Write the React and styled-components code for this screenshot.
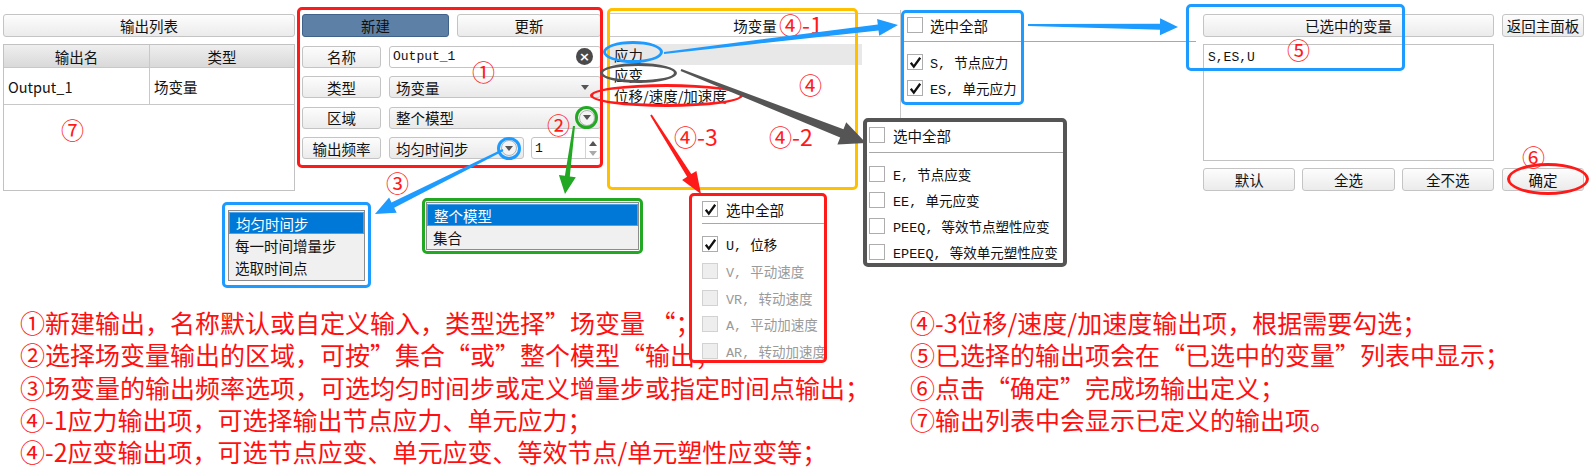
import React from 'react';
import styled, { createGlobalStyle, css } from 'styled-components';

const UI_FONT = `"Noto Sans CJK SC", "Noto Sans", sans-serif`;
const MONO_FONT = `"Liberation Mono", "Noto Sans CJK SC", monospace`;

const RED = '#ff1a1a';
const BLUE = '#1e9bff';
const GREEN = '#22a822';
const GRAY = '#555555';
const YELLOW = '#ffc000';

const GlobalStyle = createGlobalStyle`
  html, body {
    margin: 0;
    padding: 0;
    background: #fff;
  }
  body {
    font-family: ${UI_FONT};
    color: #111;
  }
`;

const Canvas = styled.div`
  position: relative;
  width: 1589px;
  height: 472px;
  overflow: hidden;
  background: #fff;
`;

const TopRow = styled.div`
  display: flex;
  align-items: flex-start;
  height: 200px;
`;

// buttons
const Button = styled.div`
  height: 23px;
  box-sizing: border-box;
  border: 1px solid #c4c4c4;
  border-radius: 3px;
  background: linear-gradient(#fdfdfd, #ebebeb);
  display: flex;
  align-items: center;
  justify-content: center;
  font-size: 14.5px;
  white-space: nowrap;
  ${(p) => p.$primary && css`
    background: #5d80a6;
    border-color: #40618a;
    color: #111;
  `}
  ${(p) => p.$width && css`width: ${p.$width}px;`}
`;

// left: output list
const LeftPanel = styled.div`
  margin: 14px 0 0 3px;
  width: 292px;
  display: flex;
  flex-direction: column;
  gap: 7px;
`;

const Table = styled.div`
  height: 147px;
  box-sizing: border-box;
  border: 1px solid #c2c2c2;
  font-size: 14.5px;
`;

const TableRow = styled.div`
  display: grid;
  grid-template-columns: 145px 1fr;
  height: ${(p) => (p.$head ? 23 : 37)}px;
  box-sizing: border-box;
  border-bottom: 1px solid #c8c8c8;
  ${(p) => p.$head && css`background: linear-gradient(#efefef, #d9d9d9);`}
`;

const Cell = styled.div`
  display: flex;
  align-items: center;
  justify-content: ${(p) => (p.$head ? 'center' : 'flex-start')};
  padding-left: ${(p) => (p.$head ? 0 : 4)}px;
  & + & {
    border-left: 1px solid #c8c8c8;
  }
`;

// middle: form
const FormPanel = styled.div`
  margin: 14px 0 0 7px;
  width: 299px;
  display: grid;
  grid-template-columns: 79px 1fr;
  column-gap: 8px;
  row-gap: 8.5px;
  font-size: 14.5px;
`;

const ButtonBar = styled.div`
  grid-column: 1 / 3;
  display: flex;
  gap: 8px;
  & > :last-child {
    flex: 1;
  }
`;

const Field = styled.div`
  height: 22px;
  box-sizing: border-box;
  border: 1px solid #c4c4c4;
  border-radius: 3px;
  display: flex;
  align-items: center;
  justify-content: space-between;
  padding: 0 ${(p) => p.$padRight ?? 10}px 0 ${(p) => (p.$mono ? 3 : 6)}px;
  background: ${(p) => (p.$white ? '#fff' : 'linear-gradient(#f9f9f9, #e9e9e9)')};
  font-family: ${(p) => (p.$mono ? MONO_FONT : UI_FONT)};
  font-size: ${(p) => (p.$mono ? 13 : 14.5)}px;
  ${(p) => p.$width && css`width: ${p.$width}px; flex: none;`}
`;

const LabelButton = styled(Button)`
  height: 22px;
`;

const FreqRow = styled.div`
  display: flex;
  gap: 7px;
  & > :last-child {
    flex: 1;
  }
`;

const Triangle = styled.span`
  width: 0;
  height: 0;
  border-left: 4.5px solid transparent;
  border-right: 4.5px solid transparent;
  ${(p) => (p.$up
    ? css`border-bottom: 5px solid ${p.$color || '#555'};`
    : css`border-top: 5px solid ${p.$color || '#555'};`)}
`;

const RoundArrow = styled.span`
  width: 16px;
  height: 16px;
  box-sizing: border-box;
  border: 1px solid #b3b3b3;
  border-radius: 50%;
  background: #f4f4f4;
  display: flex;
  align-items: center;
  justify-content: center;
`;

const ClearIcon = styled.span`
  width: 17px;
  height: 17px;
  border-radius: 50%;
  background: #4a4a4a;
  color: #fff;
  font-family: "DejaVu Sans", sans-serif;
  font-size: 13px;
  font-weight: bold;
  line-height: 17px;
  text-align: center;
`;

const SpinArrows = styled.span`
  align-self: stretch;
  width: 14px;
  border-left: 1px solid #d4d4d4;
  display: flex;
  flex-direction: column;
  align-items: center;
  justify-content: center;
  gap: 5px;
`;

// field variable tree
const FieldPanel = styled.div`
  margin: 13px 0 0 9px;
  width: 290px;
  font-size: 14.5px;
`;

const FieldHeader = styled.div`
  height: 24px;
  box-sizing: border-box;
  border-top: 1px solid #c9c9c9;
  border-bottom: 1px solid #c9c9c9;
  display: flex;
  align-items: center;
  justify-content: center;
`;

const FieldList = styled.div`
  padding-top: 7px;
`;

const FieldItem = styled.div`
  height: 20.5px;
  display: flex;
  align-items: center;
  padding-left: 4px;
  width: 248px;
  ${(p) => p.$active && css`background: #e8e8e8;`}
`;

// checklists
const StressList = styled.div`
  margin-top: 10px;
  width: 296px;
  height: 185px;
  box-sizing: border-box;
  border-left: 1px solid #c8c8c8;
  padding: 2px 0 0 6px;
`;

const CheckRow = styled.div`
  height: ${(p) => p.$h || 26}px;
  display: flex;
  align-items: center;
  gap: ${(p) => p.$gap || 7}px;
  white-space: nowrap;
  color: ${(p) => (p.$disabled ? '#9a9a9a' : '#111')};
  font-family: ${(p) => (p.$mono ? MONO_FONT : UI_FONT)};
  font-size: ${(p) => (p.$mono ? 13.5 : 14.5)}px;
`;

const Separator = styled.div`
  height: 1px;
  background: #a8a8a8;
  margin: ${(p) => p.$m || '3px 0 6px'};
`;

const Box = styled.span`
  flex: none;
  width: 16px;
  height: 16px;
  box-sizing: border-box;
  border: 1px solid ${(p) => (p.$disabled ? '#d2d2d2' : '#adadad')};
  background: ${(p) => (p.$disabled ? '#eeeeee' : '#fff')};
  display: flex;
  align-items: center;
  justify-content: center;
`;

const Check = ({ checked, disabled, label, mono, h, gap }) => (
  <CheckRow $mono={mono} $disabled={disabled} $h={h} $gap={gap}>
    <Box $disabled={disabled}>
      {checked && (
        <svg width="13" height="13" viewBox="0 0 13 13">
          <path d="M1.8 6.8 L4.8 10.6 L11.2 1.8" fill="none" stroke="#111" strokeWidth="2.3" />
        </svg>
      )}
    </Box>
    <span>{label}</span>
  </CheckRow>
);

// selected variables
const SelectedPanel = styled.div`
  margin: 14px 0 0 7px;
  width: 381px;
  display: grid;
  grid-template-columns: 291px 82px;
  grid-template-rows: 23px 117px 23px;
  column-gap: 8px;
  row-gap: 7px;
`;

const TextArea = styled.div`
  box-sizing: border-box;
  border: 1px solid #c2c2c2;
  padding: 5px 4px;
  font-family: ${MONO_FONT};
  font-size: 13px;
`;

const ButtonGroup = styled.div`
  display: grid;
  grid-template-columns: repeat(3, 1fr);
  gap: 7px;
`;

// notes
const Notes = styled.div`
  display: flex;
  padding-top: 106px;
  color: #ff1010;
  font-size: 25px;
  line-height: 32.3px;
  white-space: nowrap;
`;

const NoteColumn = styled.div`
  width: ${(p) => p.$width}px;
  padding-left: ${(p) => p.$pad}px;
  box-sizing: border-box;
`;

// overlays
const Frame = styled.div`
  position: absolute;
  left: ${(p) => p.$x}px;
  top: ${(p) => p.$y}px;
  width: ${(p) => p.$w}px;
  height: ${(p) => p.$h}px;
  box-sizing: border-box;
  border: ${(p) => p.$bw || 3}px solid ${(p) => p.$color};
  border-radius: ${(p) => (p.$round ? '50%' : '5px')};
  background: ${(p) => (p.$fill ? '#fff' : 'transparent')};
  overflow: hidden;
  ${(p) => p.$pad && css`padding: ${p.$pad};`}
`;

const ListBox = styled.div`
  box-sizing: border-box;
  height: 100%;
  border: 1px solid #8c8c8c;
  background: #f0f0f0;
  font-size: 14.5px;
  padding-top: 1px;
`;

const ListOption = styled.div`
  height: 22px;
  box-sizing: border-box;
  display: flex;
  align-items: center;
  padding-left: 6px;
  ${(p) => p.$selected && css`
    background: #0078d7;
    color: #fff;
    border: 1px solid #4aa3ea;
  `}
`;

const Annot = styled.div`
  position: absolute;
  left: ${(p) => p.$x}px;
  top: ${(p) => p.$y}px;
  color: #ff1a1a;
  font-size: 23px;
  line-height: 24px;
  white-space: nowrap;
`;

const ArrowLayer = styled.svg`
  position: absolute;
  left: 0;
  top: 0;
  pointer-events: none;
`;

const arrowPoints = ([x1, y1, x2, y2, w0, w1, hl, hw]) => {
  const dx = x2 - x1;
  const dy = y2 - y1;
  const len = Math.hypot(dx, dy);
  const ux = dx / len;
  const uy = dy / len;
  const nx = -uy;
  const ny = ux;
  const bx = x2 - ux * hl;
  const by = y2 - uy * hl;
  const pts = [
    [x1 + (nx * w0) / 2, y1 + (ny * w0) / 2],
    [bx + (nx * w1) / 2, by + (ny * w1) / 2],
    [bx + (nx * hw) / 2, by + (ny * hw) / 2],
    [x2, y2],
    [bx - (nx * hw) / 2, by - (ny * hw) / 2],
    [bx - (nx * w1) / 2, by - (ny * w1) / 2],
    [x1 - (nx * w0) / 2, y1 - (ny * w0) / 2],
  ];
  return pts.map((p) => p.map((v) => v.toFixed(1)).join(',')).join(' ');
};

const arrows = [
  { color: BLUE, geo: [664, 53, 898, 25, 2, 6, 20, 17] },
  { color: BLUE, geo: [1028, 25, 1178, 27, 2, 6, 18, 17] },
  { color: GRAY, geo: [681, 70, 866, 143, 2, 9, 26, 24] },
  { color: RED, geo: [651, 115, 701, 194, 2, 5, 22, 17] },
  { color: GREEN, geo: [574, 126, 565, 194, 2, 5, 18, 17] },
  { color: BLUE, geo: [503, 150, 375, 214, 2, 6, 20, 17] },
];

const rings = [
  { x: 297, y: 7, w: 306, h: 161, color: RED },
  { x: 607, y: 8, w: 251, h: 182, color: YELLOW },
  { x: 901, y: 10, w: 123, h: 95, color: BLUE },
  { x: 1186, y: 4, w: 219, h: 67, color: BLUE },
  { x: 603, y: 41, w: 60, h: 22, color: BLUE, round: true },
  { x: 600, y: 63, w: 77, h: 20, color: GRAY, round: true },
  { x: 590, y: 84, w: 153, h: 23, color: RED, round: true },
  { x: 1507, y: 163, w: 82, h: 32, color: RED, round: true },
  { x: 575, y: 106, w: 23, h: 23, color: GREEN, round: true },
  { x: 497, y: 137, w: 24, h: 23, color: BLUE, round: true },
];

const labels = [
  { x: 472, y: 59, t: '①' },
  { x: 547, y: 112, t: '②' },
  { x: 386, y: 170, t: '③' },
  { x: 779, y: 12, t: '④-1' },
  { x: 799, y: 72, t: '④' },
  { x: 769, y: 124, t: '④-2' },
  { x: 674, y: 124, t: '④-3' },
  { x: 1287, y: 37, t: '⑤' },
  { x: 1522, y: 144, t: '⑥' },
  { x: 61, y: 117, t: '⑦' },
];

const App = () => (
  <Canvas>
    <GlobalStyle />
    <TopRow>
      <LeftPanel>
        <Button>输出列表</Button>
        <Table>
          <TableRow $head>
            <Cell $head>输出名</Cell>
            <Cell $head>类型</Cell>
          </TableRow>
          <TableRow>
            <Cell>Output_1</Cell>
            <Cell>场变量</Cell>
          </TableRow>
        </Table>
      </LeftPanel>

      <FormPanel>
        <ButtonBar>
          <Button $primary $width={147}>新建</Button>
          <Button>更新</Button>
        </ButtonBar>
        <LabelButton>名称</LabelButton>
        <Field $white $mono $padRight={7}>
          <span>Output_1</span>
          <ClearIcon>×</ClearIcon>
        </Field>
        <LabelButton>类型</LabelButton>
        <Field $padRight={11}>
          <span>场变量</span>
          <Triangle />
        </Field>
        <LabelButton>区域</LabelButton>
        <Field $padRight={5}>
          <span>整个模型</span>
          <RoundArrow><Triangle /></RoundArrow>
        </Field>
        <LabelButton>输出频率</LabelButton>
        <FreqRow>
          <Field $width={135} $padRight={6}>
            <span>均匀时间步</span>
            <RoundArrow><Triangle /></RoundArrow>
          </Field>
          <Field $white $mono $padRight={0}>
            <span>1</span>
            <SpinArrows>
              <Triangle $up />
              <Triangle $color="#aaa" />
            </SpinArrows>
          </Field>
        </FreqRow>
      </FormPanel>

      <FieldPanel>
        <FieldHeader>场变量</FieldHeader>
        <FieldList>
          <FieldItem $active>应力</FieldItem>
          <FieldItem>应变</FieldItem>
          <FieldItem>位移/速度/加速度</FieldItem>
        </FieldList>
      </FieldPanel>

      <StressList>
        <Check label="选中全部" />
        <Separator $m="3px 0 7px -6px" />
        <Check checked mono label="S, 节点应力" />
        <Check checked mono label="ES, 单元应力" />
      </StressList>

      <SelectedPanel>
        <Button>已选中的变量</Button>
        <Button>返回主面板</Button>
        <TextArea>S,ES,U</TextArea>
        <div />
        <ButtonGroup>
          <Button>默认</Button>
          <Button>全选</Button>
          <Button>全不选</Button>
        </ButtonGroup>
        <Button>确定</Button>
      </SelectedPanel>
    </TopRow>

    <Notes>
      <NoteColumn $width={910} $pad={20}>
        <div>①新建输出，名称默认或自定义输入，类型选择”场变量 “；</div>
        <div>②选择场变量输出的区域，可按”集合“或”整个模型“输出；</div>
        <div>③场变量的输出频率选项，可选均匀时间步或定义增量步或指定时间点输出；</div>
        <div>④-1应力输出项，可选择输出节点应力、单元应力；</div>
        <div>④-2应变输出项，可选节点应变、单元应变、等效节点/单元塑性应变等；</div>
      </NoteColumn>
      <NoteColumn $width={679} $pad={0}>
        <div>④-3位移/速度/加速度输出项，根据需要勾选；</div>
        <div>⑤已选择的输出项会在“已选中的变量”列表中显示；</div>
        <div>⑥点击“确定”完成场输出定义；</div>
        <div>⑦输出列表中会显示已定义的输出项。</div>
      </NoteColumn>
    </Notes>

    {rings.map((r, i) => (
      <Frame key={i} $x={r.x} $y={r.y} $w={r.w} $h={r.h} $color={r.color} $round={r.round} />
    ))}

    <Frame $x={222} $y={202} $w={149} $h={86} $color={BLUE} $fill $pad="5px 3px 4px 3px">
      <ListBox>
        <ListOption $selected>均匀时间步</ListOption>
        <ListOption>每一时间增量步</ListOption>
        <ListOption>选取时间点</ListOption>
      </ListBox>
    </Frame>

    <Frame $x={422} $y={198} $w={221} $h={56} $color={GREEN} $fill $pad="1px">
      <ListBox>
        <ListOption $selected>整个模型</ListOption>
        <ListOption>集合</ListOption>
      </ListBox>
    </Frame>

    <Frame $x={689} $y={193} $w={138} $h={170} $color={RED} $fill $pad="0 0 0 10px">
      <Check checked label="选中全部" gap={8} />
      <Separator $m="1px 0 7px" />
      <Check checked mono label="U, 位移" h={26.7} gap={8} />
      <Check disabled mono label="V, 平动速度" h={26.7} gap={8} />
      <Check disabled mono label="VR, 转动速度" h={26.7} gap={8} />
      <Check disabled mono label="A, 平动加速度" h={26.7} gap={8} />
      <Check disabled mono label="AR, 转动加速度" h={26.7} gap={8} />
    </Frame>

    <Frame $x={863} $y={118} $w={204} $h={149} $color={GRAY} $bw={4} $fill $pad="0 0 0 2px">
      <Check label="选中全部" gap={8} />
      <Separator $m="4px 0 8px" />
      <Check mono label="E, 节点应变" gap={8} />
      <Check mono label="EE, 单元应变" gap={8} />
      <Check mono label="PEEQ, 等效节点塑性应变" gap={8} />
      <Check mono label="EPEEQ, 等效单元塑性应变" gap={8} />
    </Frame>

    {labels.map((l) => (
      <Annot key={l.t} $x={l.x} $y={l.y}>{l.t}</Annot>
    ))}

    <ArrowLayer width="1589" height="472">
      {arrows.map((a, i) => (
        <polygon key={i} points={arrowPoints(a.geo)} fill={a.color} />
      ))}
    </ArrowLayer>
  </Canvas>
);

export default App;
